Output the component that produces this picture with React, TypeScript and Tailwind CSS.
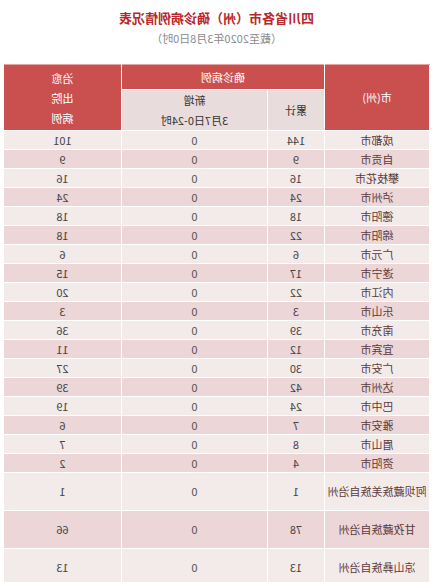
import React from 'react';

const rows: [string, string, string, string][] = [
  ['成都市', '144', '0', '101'],
  ['自贡市', '9', '0', '9'],
  ['攀枝花市', '16', '0', '16'],
  ['泸州市', '24', '0', '24'],
  ['德阳市', '18', '0', '18'],
  ['绵阳市', '22', '0', '18'],
  ['广元市', '6', '0', '6'],
  ['遂宁市', '17', '0', '15'],
  ['内江市', '22', '0', '20'],
  ['乐山市', '3', '0', '3'],
  ['南充市', '39', '0', '36'],
  ['宜宾市', '12', '0', '11'],
  ['广安市', '30', '0', '27'],
  ['达州市', '42', '0', '39'],
  ['巴中市', '24', '0', '19'],
  ['雅安市', '7', '0', '6'],
  ['眉山市', '8', '0', '7'],
  ['资阳市', '4', '0', '2'],
  ['阿坝藏族羌族自治州', '1', '0', '1'],
  ['甘孜藏族自治州', '78', '0', '66'],
  ['凉山彝族自治州', '13', '0', '13'],
];

export default function App() {
  return (
    <div
      className="w-[433px] h-[582px] overflow-hidden bg-white -scale-x-100"
      style={{ fontFamily: '"Noto Sans CJK SC", "Noto Sans", sans-serif' }}
    >
      <div className="pt-[9px] text-center">
        <h1 className="text-[13px] font-bold text-[#b8282c] leading-[18px]">四川省各市（州）确诊病例情况表</h1>
        <p className="mt-[3px] text-[11px] text-[#8a8a8a] leading-[16px]">（截至2020年3月8日0时）</p>
      </div>
      <div className="mt-[18px] ml-[3px] w-[426px]">
        <table className="w-full table-fixed border-collapse text-[11px] leading-none">
          <colgroup>
            <col className="w-[105px]" />
            <col className="w-[57px]" />
            <col className="w-[146px]" />
            <col className="w-[118px]" />
          </colgroup>
          <thead>
            <tr className="h-[25px]">
              <th rowSpan={2} className="bg-[#c9504f] text-white font-normal border border-white border-t-[#e7a3a2]">市(州)</th>
              <th colSpan={2} className="bg-[#c9504f] text-white font-normal border border-white border-t-[#e7a3a2]">确诊病例</th>
              <th rowSpan={2} className="bg-[#c9504f] text-white font-normal leading-[20px] border border-white border-t-[#e7a3a2]">
                治愈<br />出院<br />病例
              </th>
            </tr>
            <tr className="h-[40px]">
              <th className="bg-[#e9dcdc] text-[#333] font-normal border border-white">累计</th>
              <th className="bg-[#e9dcdc] text-[#333] font-normal leading-[20px] border border-white">
                新增<br />3月7日0-24时
              </th>
            </tr>
          </thead>
          <tbody>
            {rows.map((r, i) => (
              <tr
                key={r[0]}
                className={`${i >= 18 ? 'h-[38px]' : 'h-[19px]'} ${i % 2 === 0 ? 'bg-[#f3eaea]' : 'bg-[#ecd6d7]'}`}
              >
                <td className="border border-white text-center text-[#5a3a3c]">{r[0]}</td>
                <td className="border border-white text-center text-[#444]">{r[1]}</td>
                <td className="border border-white text-center text-[#555]">{r[2]}</td>
                <td className="border border-white text-center text-[#444]">{r[3]}</td>
              </tr>
            ))}
          </tbody>
        </table>
      </div>
    </div>
  );
}
